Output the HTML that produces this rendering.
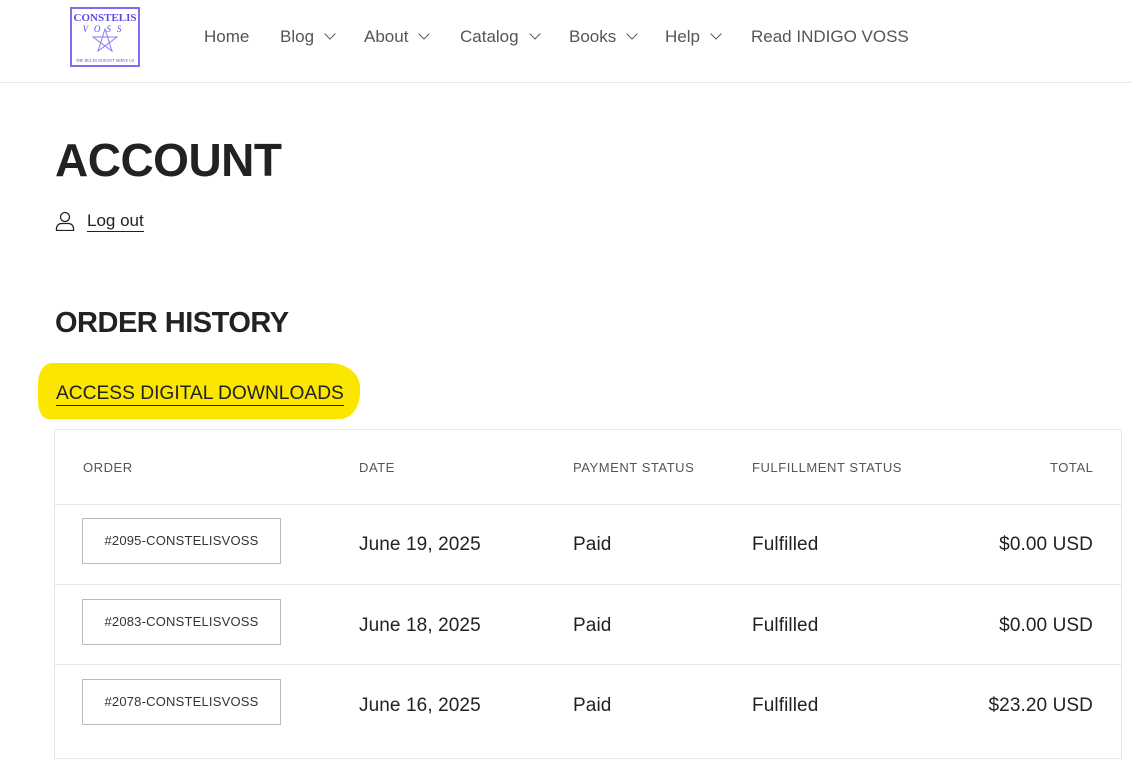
<!DOCTYPE html>
<html><head><meta charset="utf-8"><style>
*{margin:0;padding:0;box-sizing:border-box}
body{width:1132px;height:741px;overflow:hidden;background:#fff;font-family:"Liberation Sans",sans-serif;color:#222;position:relative}
.hdr{position:absolute;left:0;top:0;width:1132px;height:83px;border-bottom:1px solid #e6e6e6}
.logo{position:absolute;left:70px;top:7px;width:70px;height:60px;border:2px solid #7b6cf0;color:#5a4be8;font-family:"Liberation Serif",serif;text-align:center;overflow:hidden}
.nav{position:absolute;top:27px;font-size:17px;color:#555}
.nav span{position:absolute;white-space:nowrap}
.chev{display:inline-block;width:8px;height:8px;border-right:1.5px solid #555;border-bottom:1.5px solid #555;transform:rotate(45deg);margin-left:12px;position:relative;top:-4px}
h1{position:absolute;left:55px;top:133px;font-size:46px;font-weight:bold;letter-spacing:-.5px;color:#222}
.lo{position:absolute;left:87px;top:211px;font-size:17px;color:#222;border-bottom:1px solid #222;line-height:20px}
h2{position:absolute;left:55px;top:307px;font-size:29px;font-weight:bold;color:#222;letter-spacing:-.5px}
.hl{position:absolute;left:38px;top:363px;width:322px;height:56px;background:#fbe600;border-radius:14px 30px 20px 10px/20px 24px 26px 18px}
.add{position:absolute;left:56px;top:382px;font-size:19.2px;color:#222;border-bottom:1.5px solid #222;line-height:23px}
.tbl{position:absolute;left:54px;top:429px;width:1068px;height:330px;border:1px solid #e6e6e6}
.th{position:absolute;top:460px;font-size:13px;color:#555;letter-spacing:.55px}
.row{position:absolute;left:55px;width:1066px;border-top:1px solid #e6e6e6}
.btn{position:absolute;left:82px;width:199px;height:46px;border:1px solid #bbb;font-size:13px;text-align:center;line-height:44px;color:#333;letter-spacing:.2px}
.c{position:absolute;font-size:19px;color:#222;letter-spacing:.1px}
</style></head><body>
<div class="hdr">
 <div class="logo"><div style="font-size:11px;font-weight:bold;margin-top:3px">CONSTELIS</div><div style="font-size:9px;font-style:italic;letter-spacing:6px">VOSS</div>
 <svg width="40" height="26" viewBox="0 0 40 26" style="position:absolute;left:13px;top:18px"><polygon points="20,2 27,24 8,10 32,10 13,24" fill="none" stroke="#8a7cf2" stroke-width="1"/></svg>
 <div style="position:absolute;bottom:2px;width:100%;font-size:4px">THE RULES DOESN'T SERVE US</div></div>
 <div class="nav">
  <span style="left:204px">Home</span>
  <span style="left:280px">Blog<i class="chev"></i></span>
  <span style="left:364px">About<i class="chev"></i></span>
  <span style="left:460px">Catalog<i class="chev"></i></span>
  <span style="left:569px">Books<i class="chev"></i></span>
  <span style="left:665px">Help<i class="chev"></i></span>
  <span style="left:751px">Read INDIGO VOSS</span>
 </div>
</div>
<h1>ACCOUNT</h1>
<svg style="position:absolute;left:55px;top:211px" width="20" height="20" viewBox="0 0 20 20" fill="none" stroke="#222" stroke-width="1.3"><circle cx="10" cy="6" r="4.5"/><path d="M1.5 19.5v-2a5 5 0 0 1 5-5h7a5 5 0 0 1 5 5v2z"/></svg>
<div class="lo">Log out</div>
<h2>ORDER HISTORY</h2>
<div class="hl"></div>
<div class="add">ACCESS DIGITAL DOWNLOADS</div>
<div class="tbl"></div>
<div class="th" style="left:83px">ORDER</div>
<div class="th" style="left:359px">DATE</div>
<div class="th" style="left:573px">PAYMENT STATUS</div>
<div class="th" style="left:752px">FULFILLMENT STATUS</div>
<div class="th" style="left:1050px">TOTAL</div>
<div class="row" style="top:504px"></div>
<div class="row" style="top:584px"></div>
<div class="row" style="top:664px"></div>
<div class="btn" style="top:518px">#2095-CONSTELISVOSS</div>
<div class="c" style="left:359px;top:534px">June 19, 2025</div><div class="c" style="left:573px;top:534px">Paid</div><div class="c" style="left:752px;top:534px">Fulfilled</div><div class="c" style="right:39px;top:534px">$0.00 USD</div>
<div class="btn" style="top:599px">#2083-CONSTELISVOSS</div>
<div class="c" style="left:359px;top:615px">June 18, 2025</div><div class="c" style="left:573px;top:615px">Paid</div><div class="c" style="left:752px;top:615px">Fulfilled</div><div class="c" style="right:39px;top:615px">$0.00 USD</div>
<div class="btn" style="top:679px">#2078-CONSTELISVOSS</div>
<div class="c" style="left:359px;top:695px">June 16, 2025</div><div class="c" style="left:573px;top:695px">Paid</div><div class="c" style="left:752px;top:695px">Fulfilled</div><div class="c" style="right:39px;top:695px">$23.20 USD</div>
</body></html>
